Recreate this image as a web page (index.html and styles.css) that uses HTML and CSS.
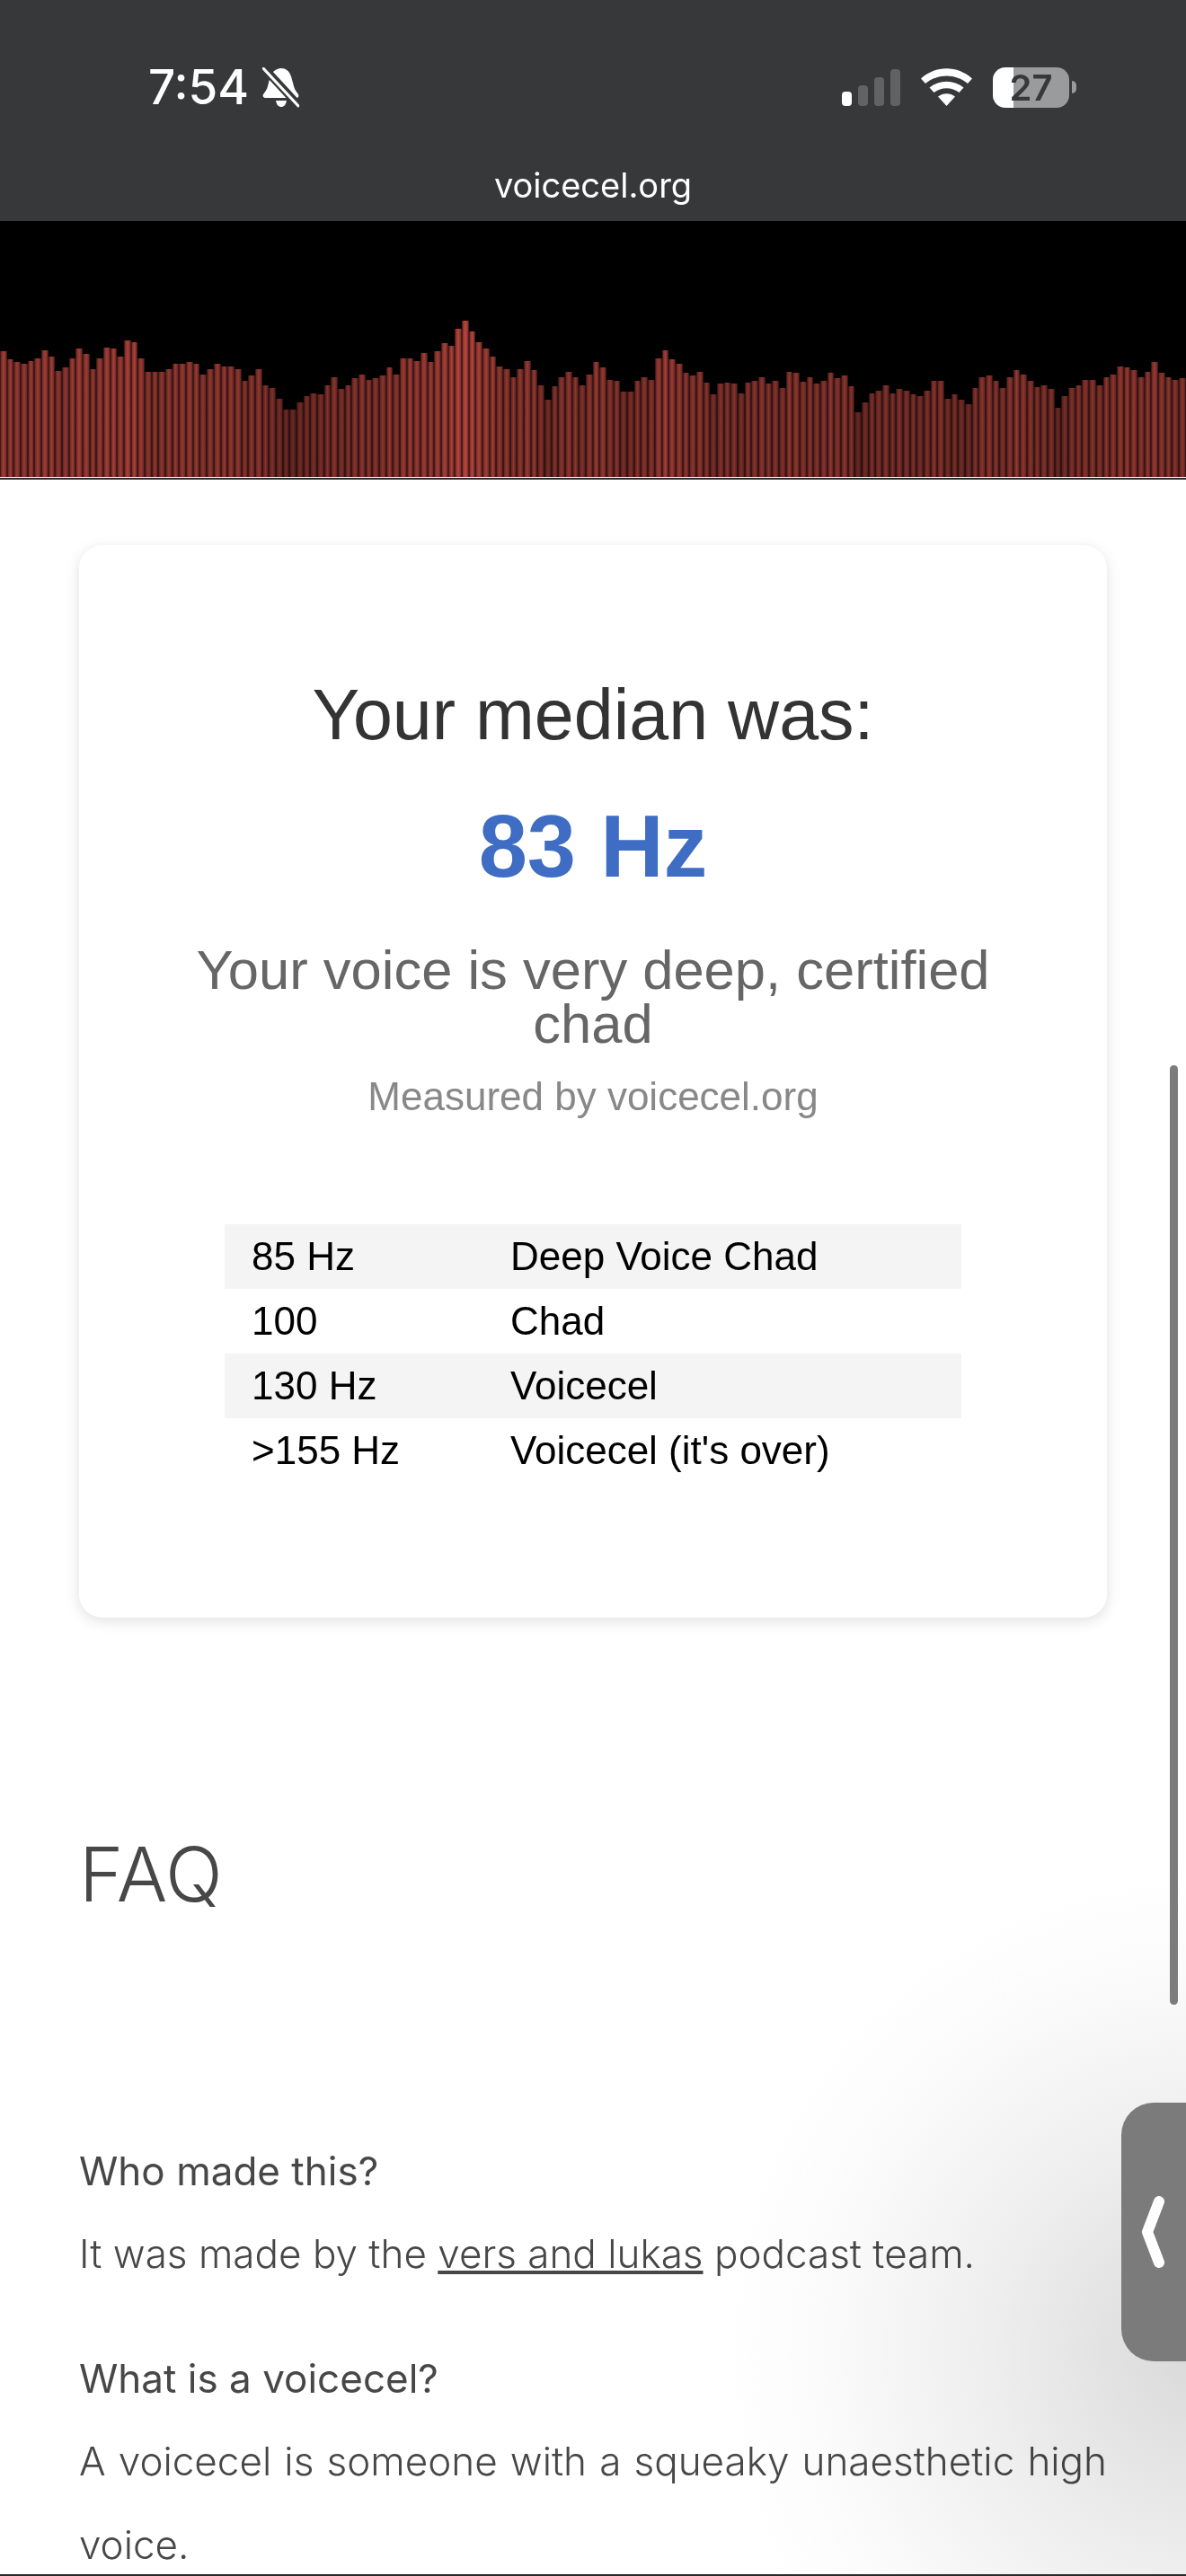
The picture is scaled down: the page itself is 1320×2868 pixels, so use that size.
FILE: index.html
```html
<!DOCTYPE html>
<html>
  <head>
    <meta charset="utf-8">
    <title>voicecel.org</title>
    <link rel="stylesheet" href="styles.css">
  </head>
  <body>
    <div class="status_bar">
      <div class="status_row">
        <div class="status_left">
          <span class="status_time">7:54</span>
          <svg class="icon_bell" viewBox="0 0 41 45" width="41" height="45">
            <path d="M21 1c5 0 9 3 11 9l3 11c1 4 3 6 5 9 1 2 0 4-2 4H4c-3 0-4-2-3-4 2-3 4-5 5-9l2-8C9 6 15 1 21 1z" fill="#fff"/>
            <path d="M15 37h12c-1 5-3 7-6 7s-5-2-6-7z" fill="#fff"/>
            <path d="M3 2l37 40" stroke="#37383a" stroke-width="9" fill="none"/>
            <path d="M1 1l39 42" stroke="#fff" stroke-width="3" stroke-linecap="round" fill="none"/>
          </svg>
        </div>
        <div class="status_right">
          <div class="signal">
            <span class="signal_bar signal_on"></span>
            <span class="signal_bar signal_2"></span>
            <span class="signal_bar signal_3"></span>
            <span class="signal_bar signal_4"></span>
          </div>
          <svg class="icon_wifi" viewBox="0 0 57 42" width="57" height="42">
            <path d="M28.500 42L19 31.500c5.500-4.500 13.500-4.500 19 0z" fill="#fff"/>
            <path d="M9.500 21.500l5 5.500c8-6.500 20-6.500 28 0l5-5.500C36.500 12.500 20.500 12.500 9.500 21.500z" fill="#fff"/>
            <path d="M0 11.500l5 5.500C18.500 5.500 38.500 5.500 52 17l5-5.500C40.500-3.500 16.500-3.500 0 11.500z" fill="#fff"/>
          </svg>
          <div class="battery">
            <div class="battery_body"><span class="battery_num">27</span></div>
            <span class="battery_nub"></span>
          </div>
        </div>
      </div>
      <div class="status_url">voicecel.org</div>
    </div>

    <div class="wave_wrap">
      <div class="wave" id="div_wave"></div>
    </div>
    <div class="wave_line"></div>

    <div class="main">
      <div class="card">
        <div class="card_title">Your median was:</div>
        <div class="card_hz">83 Hz</div>
        <div class="card_verdict">Your voice is very deep, certified chad</div>
        <div class="card_credit">Measured by voicecel.org</div>
        <table class="hz_table">
          <tr><td class="hz_col">85 Hz</td><td>Deep Voice Chad</td></tr>
          <tr><td class="hz_col">100</td><td>Chad</td></tr>
          <tr><td class="hz_col">130 Hz</td><td>Voicecel</td></tr>
          <tr><td class="hz_col">&gt;155 Hz</td><td>Voicecel (it's over)</td></tr>
        </table>
      </div>

      <h2 class="faq_title">FAQ</h2>

      <div class="faq_item">
        <div class="faq_q">Who made this?</div>
        <p class="faq_a">It was made by the <a href="#">vers and lukas</a> podcast team.</p>
      </div>
      <div class="faq_item">
        <div class="faq_q">What is a voicecel?</div>
        <p class="faq_a">A voicecel is someone with a squeaky unaesthetic high voice.</p>
      </div>
    </div>

    <div class="corner_glow"></div>
    <div class="scroll_thumb"></div>
    <div class="side_tab">
      <svg viewBox="0 0 28 80" width="28" height="80">
        <path d="M20 6L7 40l13 34" stroke="#fff" stroke-width="12" stroke-linecap="round" stroke-linejoin="round" fill="none"/>
      </svg>
    </div>
    <div class="home_line"></div>

    <script>
      // bar tops as read off the recording, 603 = floor of the wave
      let barTops = [182,210,220,225,217,208,180,200,248,237,207,173,192,243,207,171,173,200,146,153,207,252,252,252,243,226,226,218,225,261,243,225,234,234,243,282,263,243,297,306,342,378,378,355,333,324,327,297,270,310,297,274,262,279,272,263,236,261,208,207,216,190,219,183,155,165,108,81,117,153,173,200,234,243,270,243,216,245,297,345,300,270,252,270,297,261,
        218,236,279,281,318,318,282,270,279,207,180,210,225,254,264,252,288,326,291,288,291,324,288,282,270,291,282,306,252,254,284,270,291,282,254,274,263,300,387,354,324,315,297,324,308,315,327,333,315,282,282,342,326,345,361,306,270,265,282,306,270,245,261,282,304,297,308,373,333,306,297,279,279,297,270,261,234,236,245,270,252,218,254,270,279,272];
      let wave = document.querySelector("#div_wave");
      for(let i = 0; i < barTops.length; i++){
        let h = (603 - barTops[i]) / 3;
        let bar = document.createElement("div");
        bar.className = "wave_bar";
        bar.style.height = h + "px";
        bar.style.opacity = Math.min(1, 0.55 + (h - 75) / 240);
        wave.appendChild(bar);
      }
    </script>
  </body>
</html>
```

FILE: styles.css
```css
html {
  overflow: hidden;
}

html, body {
  margin: 0;
  padding: 0;
}

body {
  position: relative;
  width: 1320px;
  height: 2868px;
  overflow: hidden;
  background-color: #ffffff;
  font-family: "Liberation Sans", Arial, sans-serif;
}

/* status bar */
.status_bar {
  height: 246px;
  box-sizing: border-box;
  background-color: #37383a;
  color: #ffffff;
  font-family: Inter, "Liberation Sans", sans-serif;
  padding-top: 72px;
}

.status_row {
  display: flex;
  justify-content: space-between;
  align-items: center;
  height: 50px;
  padding: 0 122px 0 165px;
}

.status_left {
  display: flex;
  align-items: center;
  gap: 15px;
}

.status_time {
  font-size: 53px;
  font-weight: 500;
  line-height: 50px;
}

.status_right {
  display: flex;
  align-items: center;
  gap: 23px;
}

.signal {
  display: flex;
  align-items: flex-end;
  gap: 7px;
  height: 41px;
}

.signal_bar {
  width: 11px;
  border-radius: 4px;
  background-color: #616264;
}

.signal_on {
  height: 16px;
  background-color: #ffffff;
}

.signal_2 {
  height: 23px;
}

.signal_3 {
  height: 32px;
}

.signal_4 {
  height: 41px;
}

.battery {
  display: flex;
  align-items: center;
  gap: 3px;
}

.battery_body {
  width: 85px;
  height: 45px;
  border-radius: 14px;
  background: linear-gradient(90deg, #ffffff 27%, #9a9b9c 27%);
  color: #37383a;
  text-align: center;
  font-size: 40px;
  font-weight: 600;
  line-height: 45px;
}

.battery_nub {
  width: 5px;
  height: 14px;
  border-radius: 0 5px 5px 0;
  background-color: #9a9b9c;
}

.status_url {
  margin-top: 60px;
  text-align: center;
  font-size: 38px;
  font-weight: 400;
  line-height: 48px;
}

/* waveform */
.wave_wrap {
  height: 285px;
  background-color: #000000;
  display: flex;
  align-items: flex-end;
}

.wave {
  display: flex;
  align-items: flex-end;
  width: 1320px;
  overflow: hidden;
}

.wave_bar {
  flex: 0 0 7.674px;
  box-sizing: border-box;
  background: linear-gradient(90deg, #2a1110 0, #8a3430 16%, #c84c40 50%, #8a3430 84%, #2a1110 100%);
}

.wave_line {
  height: 3px;
  background-color: #ffffff;
  border-bottom: 2px solid #2a2a2a;
  box-sizing: border-box;
}

/* result card */
.main {
  padding: 73px 88px 0;
}

.card {
  height: 1194px;
  box-sizing: border-box;
  padding-top: 145px;
  border-radius: 26px;
  background-color: #ffffff;
  box-shadow: 0 4px 16px rgba(0, 0, 0, 0.12);
  text-align: center;
}

.card_title {
  font-size: 79px;
  line-height: 88px;
  color: #333333;
}

.card_hz {
  margin-top: 58px;
  font-size: 97.500px;
  font-weight: 700;
  line-height: 90px;
  color: #3f6dc3;
}

.card_verdict {
  margin: 62px 100px 0;
  font-size: 61.500px;
  line-height: 60px;
  color: #666666;
}

.card_credit {
  margin-top: 24px;
  font-size: 44px;
  line-height: 54px;
  color: #888888;
}

.hz_table {
  width: 820px;
  margin: 115px auto 0;
  border-collapse: collapse;
  text-align: left;
  font-size: 44px;
  color: #000000;
}

.hz_table td {
  height: 72px;
  padding: 0 0 0 30px;
}

.hz_table tr:nth-child(odd) {
  background-color: #f4f4f4;
}

.hz_col {
  width: 258px;
}

/* faq */
.faq_title {
  margin: 236px 0 0;
  font-family: Inter, "Liberation Sans", sans-serif;
  font-size: 84px;
  font-weight: 350;
  line-height: 100px;
  color: #474747;
}

.faq_item {
  font-family: Inter, "Liberation Sans", sans-serif;
  color: #474747;
}

.faq_q {
  font-size: 44px;
  font-weight: 400;
  line-height: 60px;
}

.faq_a {
  margin: 16px 0 0;
  font-size: 44px;
  font-weight: 300;
  line-height: 93px;
  text-align: justify;
}

.faq_a a {
  color: #474747;
}

.faq_title + .faq_item {
  margin-top: 250px;
}

.faq_item + .faq_item {
  margin-top: 62px;
}

/* things floating over the page */
.corner_glow {
  position: absolute;
  left: 720px;
  top: 2000px;
  width: 600px;
  height: 868px;
  background: radial-gradient(circle 540px at 620px 620px, #d9d9d9 0, #eeeeee 240px, #fbfbfb 430px, rgba(255, 255, 255, 0) 540px);
  mix-blend-mode: multiply;
}

.scroll_thumb {
  position: absolute;
  left: 1302px;
  top: 1186px;
  width: 9px;
  height: 1046px;
  border-radius: 5px;
  background-color: #7c7c7c;
}

.side_tab {
  position: absolute;
  left: 1248px;
  top: 2341px;
  width: 72px;
  height: 288px;
  box-sizing: border-box;
  padding-left: 22px;
  display: flex;
  align-items: center;
  border-radius: 36px 0 0 36px;
  background-color: #7b7b7b;
}

.home_line {
  position: absolute;
  left: 0;
  right: 0;
  bottom: 0;
  height: 2px;
  background-color: #2a2a2a;
}
```
